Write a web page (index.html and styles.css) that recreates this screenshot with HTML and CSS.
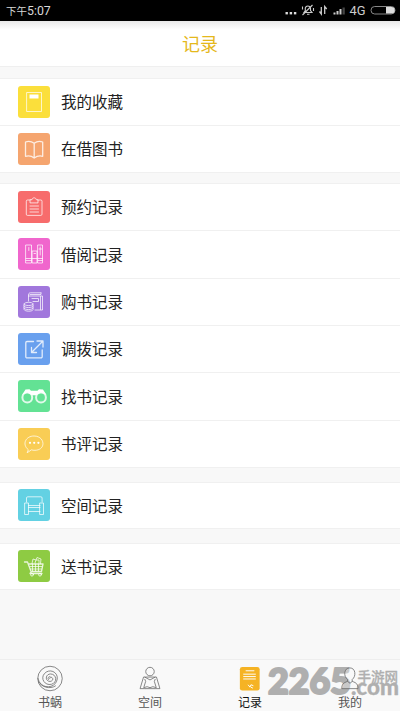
FILE: index.html
```html
<!DOCTYPE html>
<html lang="zh-CN">
<head>
<meta charset="utf-8">
<title>记录</title>
<link rel="stylesheet" href="styles.css">
</head>
<body>
<div class="status">
  <span class="time">下午<b>5:07</b></span>
  <svg class="indicators" width="116" height="21" viewBox="0 0 116 21">
    <g fill="#ddd"><rect x="5.500" y="12" width="2.400" height="2.400"/><rect x="9.700" y="12" width="2.400" height="2.400"/><rect x="13.900" y="12" width="2.400" height="2.400"/></g>
    <g fill="none" stroke="#ccc" stroke-width="1.100"><path d="M24 12.500h8l-1.500-2V8a2.700 2.700 0 0 0-5.200 0v2.500zM27 14.200h2.500M22.500 15 32.500 5M22.500 6.500v3M33.500 8v3"/><path d="M41.300 7v7l-1.800-2.500M44.700 14V6.500l2 2.500" stroke-width="1.300"/></g>
    <path d="M53.500 14.500v-2h2v2zM56.500 14.500v-3.500h2v3.500zM59.500 14.500V9h2v5.500z" fill="#ccc"/>
    <path d="M62.500 14.500V7.500h2.300v7z" fill="#444"/>
    <text x="69.500" y="14.700" class="net" textLength="16" lengthAdjust="spacingAndGlyphs">4G</text>
    <rect x="91" y="6.500" width="24" height="7.500" rx="3.700" fill="none" stroke="#888"/>
    <path d="M106 7h5.500a3 3 0 0 1 0 6.500H106z" fill="#ddd"/>
  </svg>
</div>
<header class="header"><h1>记录</h1></header>
<main>
  <section class="group pair">
    <div class="row"><span class="icon yellow"><svg viewBox="0 0 32 32"><path d="M9 6.500h14.500v19H9z"/><path class="solid" d="M11.500 8.500h9v4h-9z"/></svg></span>我的收藏</div>
    <div class="row"><span class="icon orange"><svg viewBox="0 0 32 32"><path class="thick" d="M16.200 10.300C13 8 10 8 7.500 9v14.300c3-.8 6-.5 8.700 1.700 3-2.200 5.500-2.500 8.500-1.700V9c-3-1-5.800-.8-8.500 1.300zM16.200 10.300V25"/></svg></span>在借图书</div>
  </section>
  <section class="group six">
    <div class="row"><span class="icon red"><svg viewBox="0 0 32 32"><path d="M12 9H9.500a1.200 1.200 0 0 0-1.200 1.200v13a1.200 1.200 0 0 0 1.200 1.200h13.300a1.200 1.200 0 0 0 1.200-1.200v-13A1.200 1.200 0 0 0 22.800 9H20M12 11.500V8.700h2c.3-2.500 4-2.500 4.300 0H20v2.800zM12 15h8.500M12 18h8.500M12 21h8.500"/></svg></span>预约记录</div>
    <div class="row"><span class="icon pink"><svg viewBox="0 0 32 32"><path d="M8 7h5.500v18H8zM14.500 13H19v12h-4.500zM20 7h4.500v18H20zM8 20.500h5.500M8 22.500h5.500M14.500 20.500H19M20 20.500h4.500M20 22.500h4.500M10.800 9.500v3M22.200 9v8M21 11h2.500M16 15.500h1.500"/></svg></span>借阅记录</div>
    <div class="row"><span class="icon purple"><svg viewBox="0 0 32 32"><path d="M10.500 15V9c0-1.500.8-2.200 2-2.200H23M10.500 10H24.500v14H17M12 8.500h11V7M22.500 10.500v13M14 12.500h6.500v3H15"/><path d="M6 18c0-2.300 9-2.300 9 0v5.500c0 2.300-9 2.300-9 0zM6 18c0 2.200 9 2.200 9 0M6 20c0 2.200 9 2.200 9 0M6 22c0 2.200 9 2.200 9 0"/></svg></span>购书记录</div>
    <div class="row"><span class="icon blue"><svg viewBox="0 0 32 32"><path class="thick" d="M15.500 8.500H9a1.200 1.200 0 0 0-1.200 1.200v14A1.200 1.200 0 0 0 9 24.900h14a1.200 1.200 0 0 0 1.200-1.200V17M13.500 19.500 25 8M19 8h6v6M13.500 14.500v5h5"/></svg></span>调拨记录</div>
    <div class="row"><span class="icon green"><svg viewBox="0 0 32 32"><circle class="heavy" cx="9.300" cy="17.500" r="4.900"/><circle class="heavy" cx="23" cy="17.500" r="4.900"/><path class="solid" d="M4 15 7.500 9.500l4-.3 1.500 1.500h6.500L21 9.200l4 .3 3.500 5.500-5.500-2.500-5 2.700h-4L9.300 12.500z"/></svg></span>找书记录</div>
    <div class="row"><span class="icon amber"><svg viewBox="0 0 32 32"><path d="M10 21.500C3.500 16 8 8 16 8c11 0 12.500 14 1 14.300-1.500 0-2.500 0-3.500-.5L9.500 24.500z"/><g class="solid"><circle cx="12" cy="14.800" r="1.100"/><circle cx="16.200" cy="14.800" r="1.100"/><circle cx="20.400" cy="14.800" r="1.100"/></g></svg></span>书评记录</div>
  </section>
  <section class="group single">
    <div class="row"><span class="icon cyan"><svg viewBox="0 0 32 32"><path d="M8.500 13V9a1.200 1.200 0 0 1 1.200-1.200h13.200A1.200 1.200 0 0 1 24.100 9v4M7 14h3.500v11.500H7zM22 14h3.500v11.500H22zM10.500 16.500H22M10.500 18.500H22M10.500 22.500H22"/></svg></span>空间记录</div>
  </section>
  <section class="group single">
    <div class="row"><span class="icon lime"><svg viewBox="0 0 32 32"><path class="thick" d="M6.500 12h3l3.500 9.500h10.500L25 14H10.500M13.500 21.500l-1.500 2h12"/><path d="M12 16.500h12M12.500 19h11M14.500 14v7M17.500 14v7M20.500 14v7M14 13.500l1-4.500 3 1 1-2.500 4 1.500-.5 4.500M17 13l1-3h3v3"/><circle cx="14" cy="24.700" r="1.400"/><circle cx="22" cy="24.700" r="1.400"/></svg></span>送书记录</div>
  </section>
</main>
<nav class="tabs">
  <svg class="watermark" width="136" height="36" viewBox="0 0 136 36">
    <text class="digits" x="3" y="29" textLength="83" lengthAdjust="spacingAndGlyphs">2265</text>
    <text class="site" x="92.500" y="16.500" textLength="40.500" lengthAdjust="spacingAndGlyphs">手游网</text>
    <text class="com" x="86" y="29.500" textLength="48" lengthAdjust="spacingAndGlyphs">.com</text>
  </svg>
  <div class="tab"><svg viewBox="0 0 28 28"><circle cx="14" cy="14" r="12.700"/><path d="M14 14.500c-1-1 .5-2.500 2-1.500 2.500 1.800-.5 5-3.500 3.800-4-1.700-2.500-7.500 2-7.500 6.500 0 7.500 9 1 10.700-7 1.700-11.500-6-7.500-10.800C13 3 22.500 7 21.500 14.500c-1 8-11 10.500-16.500 5.500-2-1.800-3-4-3.500-6.500"/><path d="M13 15.500c-1.800-1-1-3.500 1.200-3.500M2 17c3 6 12 8.500 18 4.500"/></svg><span>书蜗</span></div>
  <div class="tab"><svg viewBox="0 0 28 28"><circle cx="14" cy="6.800" r="4.400"/><path d="M9.500 12.500H7.300L3.700 24.500h6M18.500 12.500h2.200l3.600 12h-6M8.500 12.500l5.500 3 5.500-3M8.500 14.500l1 2.500-2 6.500 3.500-1 3 1 3-1 3.500 1-2-6.500 1-2.500M9.500 24.500h9M9.500 12.500h9"/></svg><span>空间</span></div>
  <div class="tab active"><svg viewBox="0 0 28 28"><rect class="note" x="3.500" y="2" width="20.500" height="24.500" rx="2.500"/><path class="lines" d="M9.500 6h9M7 9.500h13M7 12h13M7 14.500h13M12 20.500l2 2.500 1-2.500 2.500 1M15 23l2 1"/></svg><span>记录</span></div>
  <div class="tab"><svg class="person" viewBox="0 0 28 28"><path d="M5.500 24.500c0-4.500 1.500-6 6-7.500v-2C7 12 7.500 3 13.800 3s6.700 9 2.500 12v2c4.500 1.500 6 3 6 7.500zM11.500 17l2.500 2 2.300-2"/></svg><span>我的</span></div>
</nav>
</body>
</html>
```
FILE: styles.css
```css
* { box-sizing: border-box; }
body {
  margin: 0;
  height: 711px;
  display: flex;
  flex-direction: column;
  overflow: hidden;
  background: #f8f8f8;
  color: #222;
  font-family: "Noto Sans CJK SC", sans-serif;
}
.status {
  flex: none;
  height: 21px;
  padding: 0 4px 0 6px;
  display: flex;
  align-items: center;
  justify-content: space-between;
  background: #000;
  color: #d8d8d8;
}
.time { font: 10.500px/20px "Noto Sans CJK SC", sans-serif; }
.time b { font: 12.300px Roboto, sans-serif; }
.net { font: 12px Roboto, sans-serif; fill: #ccc; }
.header {
  flex: none;
  height: 46px;
  display: flex;
  align-items: center;
  justify-content: center;
  background: linear-gradient(#e9e9e9, #fff 9px);
  border-bottom: 1px solid #efefef;
}
h1 {
  margin: 0;
  padding-bottom: 1px;
  font-size: 18px;
  font-weight: 400;
  line-height: 24px;
  color: #e5b81c;
}
main {
  flex: 1;
  display: flex;
  flex-direction: column;
  padding-top: 11px;
}
.group {
  display: flex;
  flex-direction: column;
  background: #fff;
  border-top: 1px solid #f0f0f0;
  border-bottom: 1px solid #f0f0f0;
}
.pair { height: 95px; margin-bottom: 10px; }
.six { height: 285px; margin-bottom: 14px; }
.single { height: 47px; margin-bottom: 14px; }
.row {
  flex: 1;
  display: flex;
  align-items: center;
  gap: 10.500px;
  padding: 0 0 1.600px 18.400px;
  font-size: 15.500px;
  line-height: 20px;
}
.row + .row { border-top: 1px solid #f0f0f0; }
.icon {
  width: 32px;
  height: 32px;
  margin-top: 1px;
  border-radius: 3px;
}
svg { display: block; }
.icon svg {
  width: 32px;
  height: 32px;
  fill: none;
  stroke: rgba(255, 255, 255, .8);
  stroke-width: .9;
  stroke-linejoin: round;
  stroke-linecap: round;
}
.icon .thick { stroke-width: 1.300; }
.icon .heavy { stroke-width: 2; }
.icon .solid { fill: #fff; stroke: none; }
.yellow { background: #fbdf3b; }
.orange { background: #f5a56f; }
.red { background: #f76c6c; }
.pink { background: #f066cd; }
.purple { background: #a177dc; }
.blue { background: #69a0ee; }
.green { background: #63e294; }
.amber { background: #f9cd55; }
.cyan { background: #63d1e3; }
.lime { background: #8ecb43; }
.tabs {
  position: relative;
  flex: none;
  height: 52px;
  display: flex;
  background: #f9f9f9;
  border-top: 1px solid #eee;
}
.tab {
  position: relative;
  flex: 1;
  display: flex;
  flex-direction: column;
  align-items: center;
  padding-top: 5px;
  font-size: 12px;
  line-height: 19px;
  color: #555;
}
.tab svg {
  width: 28px;
  height: 28px;
  fill: none;
  stroke: #666;
  stroke-width: .8;
}
.tab.active { color: #111; }
.tab .note { fill: #f5b324; stroke: none; }
.tab .lines { stroke: #fff; stroke-width: 1; }
.tab .person path { fill: rgba(249, 249, 249, .35); }
.watermark {
  position: absolute;
  left: 265px;
  top: 5px;
  fill: #afafaf;
  stroke: #afafaf;
  stroke-width: .3;
  stroke-linejoin: round;
}
.digits { font: 900 36px Lato, sans-serif; stroke-width: 2.200; }
.site { font: 500 13.500px "Noto Sans CJK SC", sans-serif; }
.com { font: 900 22px Lato, sans-serif; }
```
